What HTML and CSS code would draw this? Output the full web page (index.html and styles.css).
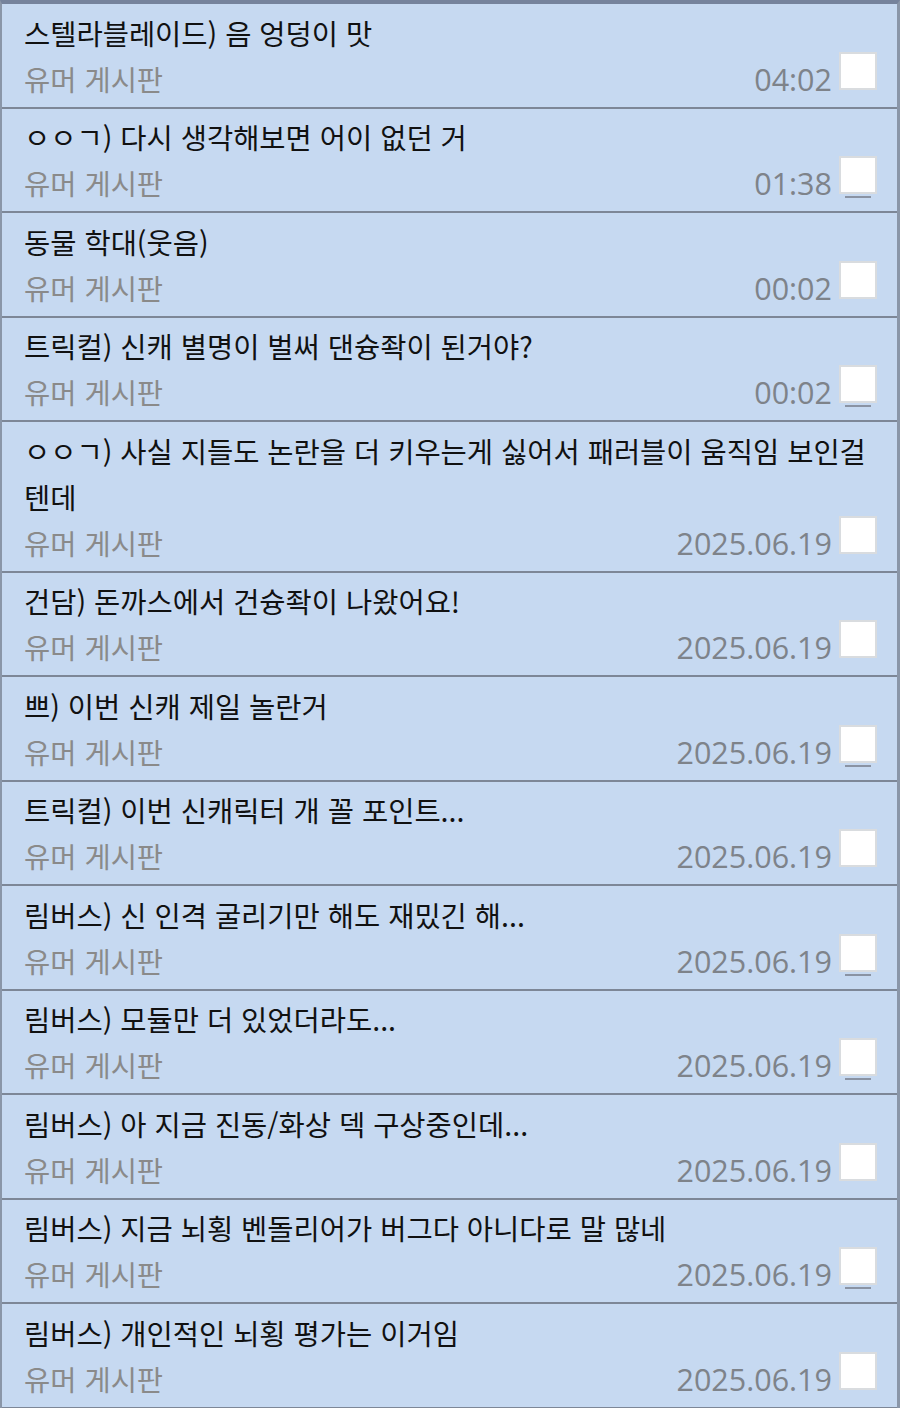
FILE: index.html
```html
<!DOCTYPE html>
<html lang="ko">
<head>
<meta charset="utf-8">
<link rel="stylesheet" href="styles.css">
<title>유머 게시판</title>
</head>
<body>
<ul class="list">
  <li class="item"><div class="title">스텔라블레이드) 음 엉덩이 맛</div><div class="meta"><span class="board">유머 게시판</span><span class="date">04:02</span><span class="check"></span></div></li>
  <li class="item"><div class="title">ㅇㅇㄱ) 다시 생각해보면 어이 없던 거</div><div class="meta"><span class="board">유머 게시판</span><span class="date">01:38</span><span class="check mark"></span></div></li>
  <li class="item"><div class="title">동물 학대(웃음)</div><div class="meta"><span class="board">유머 게시판</span><span class="date">00:02</span><span class="check"></span></div></li>
  <li class="item"><div class="title">트릭컬) 신캐 별명이 벌써 댄슝좍이 된거야?</div><div class="meta"><span class="board">유머 게시판</span><span class="date">00:02</span><span class="check mark"></span></div></li>
  <li class="item"><div class="title">ㅇㅇㄱ) 사실 지들도 논란을 더 키우는게 싫어서 패러블이 움직임 보인걸 텐데</div><div class="meta"><span class="board">유머 게시판</span><span class="date">2025.06.19</span><span class="check"></span></div></li>
  <li class="item"><div class="title">건담) 돈까스에서 건슝좍이 나왔어요!</div><div class="meta"><span class="board">유머 게시판</span><span class="date">2025.06.19</span><span class="check"></span></div></li>
  <li class="item"><div class="title">쁘) 이번 신캐 제일 놀란거</div><div class="meta"><span class="board">유머 게시판</span><span class="date">2025.06.19</span><span class="check mark"></span></div></li>
  <li class="item"><div class="title">트릭컬) 이번 신캐릭터 개 꼴 포인트...</div><div class="meta"><span class="board">유머 게시판</span><span class="date">2025.06.19</span><span class="check"></span></div></li>
  <li class="item"><div class="title">림버스) 신 인격 굴리기만 해도 재밌긴 해...</div><div class="meta"><span class="board">유머 게시판</span><span class="date">2025.06.19</span><span class="check mark"></span></div></li>
  <li class="item"><div class="title">림버스) 모듈만 더 있었더라도...</div><div class="meta"><span class="board">유머 게시판</span><span class="date">2025.06.19</span><span class="check mark"></span></div></li>
  <li class="item"><div class="title">림버스) 아 지금 진동/화상 덱 구상중인데...</div><div class="meta"><span class="board">유머 게시판</span><span class="date">2025.06.19</span><span class="check"></span></div></li>
  <li class="item"><div class="title">림버스) 지금 뇌횡 벤돌리어가 버그다 아니다로 말 많네</div><div class="meta"><span class="board">유머 게시판</span><span class="date">2025.06.19</span><span class="check mark"></span></div></li>
  <li class="item"><div class="title">림버스) 개인적인 뇌횡 평가는 이거임</div><div class="meta"><span class="board">유머 게시판</span><span class="date">2025.06.19</span><span class="check"></span></div></li>
</ul>
</body>
</html>
```
FILE: styles.css
```css
html, body {
  margin: 0;
  padding: 0;
  background: #c6d9f1;
}
.list {
  list-style: none;
  margin: 0;
  padding: 0;
  border-top: 4px solid #76839c;
  border-left: 2px solid #8a96a8;
  border-right: 3px solid #8a96a8;
}
.item {
  background: #c6d9f1;
  padding: 5.5px 20px 5px 22px;
  border-bottom: 2px solid #7d8797;
  font-family: "Noto Sans CJK KR", "Noto Sans", sans-serif;
}
.title {
  font-size: 28.5px;
  line-height: 46px;
  color: #111111;
}
.meta {
  display: flex;
  align-items: flex-start;
  line-height: 46px;
}
.board {
  font-size: 28.5px;
  color: #8a8a8a;
  flex: 1;
}
.date {
  font-family: "Open Sans", "Noto Sans", sans-serif;
  font-size: 30.5px;
  color: #7e838a;
  margin-right: 7px;
}
.check {
  position: relative;
  width: 34px;
  height: 34px;
  margin-top: -4px;
  background: #ffffff;
  border: 2px solid #d9dcdf;
}
.check.mark::after {
  content: "";
  position: absolute;
  left: 4px;
  right: 4px;
  bottom: -6px;
  height: 2px;
  background: #8a93a3;
}
```
